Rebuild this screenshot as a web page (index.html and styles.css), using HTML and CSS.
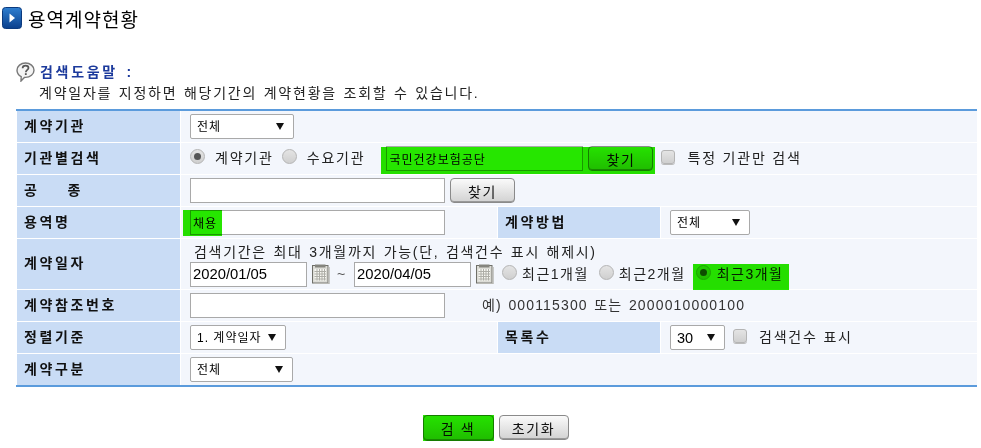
FILE: index.html
```html
<!DOCTYPE html>
<html lang="ko">
<head>
    <meta charset="UTF-8">
    <title>용역계약현황</title>
    <link rel="stylesheet" href="styles.css">
</head>
<body>
    <div class="page-title">
        <svg class="title-icon" width="20" height="22" viewBox="0 0 20 22">
            <defs>
                <linearGradient id="titleBlue" x1="0" y1="0" x2="0" y2="1">
                    <stop offset="0" stop-color="#2f7fd0"/>
                    <stop offset="1" stop-color="#0a3f8c"/>
                </linearGradient>
            </defs>
            <rect x="0.5" y="0.5" width="19" height="21" rx="3" fill="url(#titleBlue)" stroke="#0b3a7e"/>
            <path d="M7.5 6.5 L13 11 L7.5 15.5 Z" fill="#fff"/>
        </svg>
        <h1>용역계약현황</h1>
    </div>

    <div class="help">
        <div class="help-head">
            <svg class="help-icon" width="19" height="20" viewBox="0 0 19 20">
                <path d="M9.5 1 C14.2 1 18 4.2 18 8.2 C18 12.2 14.2 15.4 9.5 15.4 L8.4 15.4 L5 19 L5.2 14.6 C2.7 13.3 1 11 1 8.2 C1 4.2 4.8 1 9.5 1 Z" fill="#f4f4f4" stroke="#777" stroke-width="1.4"/>
                <path d="M6.6 6.2 C6.6 4.5 8 3.6 9.6 3.6 C11.2 3.6 12.5 4.6 12.5 6 C12.5 7.8 9.8 8 9.8 10.2" fill="none" stroke="#555" stroke-width="1.7"/>
                <rect x="8.9" y="11.2" width="1.8" height="1.8" fill="#555"/>
            </svg>
            <strong>검색도움말 :</strong>
        </div>
        <p>계약일자를 지정하면 해당기간의 계약현황을 조회할 수 있습니다.</p>
    </div>

    <table class="search-table">
        <colgroup>
            <col class="col-label-a">
            <col class="col-value">
            <col class="col-label-b">
            <col class="col-value">
        </colgroup>
        <tr>
            <th>계약기관</th>
            <td colspan="3"><div class="field"><select class="sel sel-agency"><option>전체</option></select></div></td>
        </tr>
        <tr>
            <th>기관별검색</th>
            <td colspan="3">
                <div class="field">
                    <input type="radio" name="kind" class="radio" checked>
                    <span class="opt opt-kind">계약기관</span>
                    <input type="radio" name="kind" class="radio">
                    <span class="opt opt-demand">수요기관</span>
                    <span class="marked">
                        <input type="text" class="txt txt-org" value="국민건강보험공단">
                        <button class="btn btn-find">찾기</button>
                        <span class="mark mark-org"></span>
                    </span>
                    <input type="checkbox" class="check">
                    <span class="opt">특정 기관만 검색</span>
                </div>
            </td>
        </tr>
        <tr>
            <th><span class="spread">공    종</span></th>
            <td colspan="3">
                <div class="field">
                    <input type="text" class="txt txt-wide">
                    <button class="btn btn-find btn-kind">찾기</button>
                </div>
            </td>
        </tr>
        <tr>
            <th>용역명</th>
            <td>
                <div class="field">
                    <span class="marked">
                        <input type="text" class="txt txt-wide" value="채용">
                        <span class="mark mark-name"></span>
                    </span>
                </div>
            </td>
            <th class="label-b">계약방법</th>
            <td><div class="field"><select class="sel sel-method"><option>전체</option></select></div></td>
        </tr>
        <tr class="row-date">
            <th>계약일자</th>
            <td colspan="3">
                <p class="date-note">검색기간은 최대 3개월까지 가능(단, 검색건수 표시 해제시)</p>
                <div class="field">
                    <input type="text" class="txt txt-date" value="2020/01/05">
                    <svg class="cal" width="18" height="20" viewBox="0 0 18 20">
                        <use href="#calIcon"/>
                    </svg>
                    <span class="tilde">~</span>
                    <input type="text" class="txt txt-date" value="2020/04/05">
                    <svg class="cal" width="18" height="20" viewBox="0 0 18 20">
                        <defs>
                            <g id="calIcon">
                                <rect x="0.5" y="1.5" width="15.5" height="17.5" fill="#dcdcd6" stroke="#6f6f68"/>
                                <rect x="3" y="0.5" width="10.5" height="3" fill="#85857e"/>
                                <rect x="2.5" y="5" width="11.5" height="11.5" fill="#f7f7f2"/>
                                <path d="M2.5 7.5H14M2.5 10H14M2.5 12.5H14M2.5 15H14M5 5V16.5M7.5 5V16.5M10 5V16.5M12.5 5V16.5" stroke="#aeaea7" stroke-width="1"/>
                                <path d="M17 3V19.5H2" fill="none" stroke="#b9b9b4" stroke-width="1.5"/>
                            </g>
                        </defs>
                        <use href="#calIcon"/>
                    </svg>
                    <input type="radio" name="period" class="radio radio-m1">
                    <span class="opt opt-month">최근1개월</span>
                    <input type="radio" name="period" class="radio">
                    <span class="opt opt-month opt-month-last">최근2개월</span>
                    <span class="marked marked-month">
                        <input type="radio" name="period" class="radio" checked>
                        <span class="opt">최근3개월</span>
                        <span class="mark mark-month"></span>
                    </span>
                </div>
            </td>
        </tr>
        <tr>
            <th>계약참조번호</th>
            <td colspan="3">
                <div class="field">
                    <input type="text" class="txt txt-wide">
                    <span class="ref-example">예) 000115300 또는 2000010000100</span>
                </div>
            </td>
        </tr>
        <tr>
            <th>정렬기준</th>
            <td><div class="field"><select class="sel sel-sort"><option>1. 계약일자</option></select></div></td>
            <th class="label-b">목록수</th>
            <td>
                <div class="field">
                    <select class="sel sel-count"><option>30</option></select>
                    <input type="checkbox" class="check check-count">
                    <span class="opt">검색건수 표시</span>
                </div>
            </td>
        </tr>
        <tr>
            <th>계약구분</th>
            <td colspan="3"><div class="field"><select class="sel sel-agency sel-type"><option>전체</option></select></div></td>
        </tr>
    </table>

    <div class="actions">
        <span class="marked">
            <button class="btn btn-search">검 색</button>
            <span class="mark mark-search"></span>
        </span>
        <button class="btn btn-reset">초기화</button>
    </div>
</body>
</html>
```

FILE: styles.css
```css
:root {
    --label-bg: #c9dcf5;
    --cell-bg: #f3f6fc;
    --line-blue: #5b9bdc;
    --mark-green: #26e600;
    --text-color: #222;
}

* {
    margin: 0;
    padding: 0;
    box-sizing: border-box;
}

body {
    background: #fff;
    color: var(--text-color);
    font-family: "Liberation Sans", "Noto Sans CJK KR", sans-serif;
    font-size: 14px;
    padding: 7px 4px 0 16px;
}

.page-title {
    display: flex;
    align-items: center;
    height: 22px;
    margin-left: -14px;
}

.title-icon {
    margin-right: 6px;
}

h1 {
    font-size: 19px;
    font-weight: 400;
    color: #000;
    letter-spacing: 1px;
}

.help {
    margin-top: 33px;
    height: 47px;
}

.help-head {
    display: flex;
    align-items: center;
    height: 20px;
}

.help-head strong {
    margin: 0 0 3px 5px;
    color: #1c3a9c;
    font-size: 14px;
    letter-spacing: 2.7px;
    word-spacing: 2px;
}

.help p {
    margin: 2px 0 0 23px;
    letter-spacing: 1.75px;
    word-spacing: 1px;
    line-height: 18px;
}

.search-table {
    width: 961px;
    table-layout: fixed;
    border-collapse: separate;
    border-spacing: 0;
    border-top: 2px solid var(--line-blue);
    border-bottom: 2px solid var(--line-blue);
}

.col-label-a {
    width: 165px;
}

.col-label-b {
    width: 164px;
}

.col-value {
    width: 316px;
}

th, td {
    height: 32px;
    border-bottom: 1px solid #fff;
    vertical-align: middle;
}

tr:last-child th, tr:last-child td {
    height: 31px;
    border-bottom: 0;
}

th {
    background: var(--label-bg);
    border-left: 1px solid #fff;
    border-right: 1px solid #fff;
    padding: 0 0 4px 7px;
    text-align: left;
    font-size: 14px;
    font-weight: 700;
    color: #111;
    letter-spacing: 2.6px;
}

.spread {
    white-space: pre;
    letter-spacing: 3px;
}

td {
    background: var(--cell-bg);
    padding-left: 9px;
}

.row-date th, .row-date td {
    height: 51px;
}

.field {
    display: flex;
    align-items: center;
    height: 25px;
}

.date-note {
    margin-left: 4px;
    line-height: 20px;
    letter-spacing: 1.7px;
    word-spacing: 1px;
}

.txt {
    height: 25px;
    border: 1px solid #a9a9a9;
    background: #fff;
    padding: 0 2px;
    font-family: inherit;
    font-size: 12px;
    letter-spacing: 1px;
    color: #000;
    outline: none;
}

.txt-wide {
    width: 255px;
}

.txt-org {
    width: 197px;
}

.txt-date {
    width: 117px;
    font-size: 14.8px;
    letter-spacing: 0;
}

.sel {
    height: 25px;
    appearance: none;
    border: 1px solid #a9a9a9;
    border-radius: 2px;
    padding-left: 6px;
    font-family: inherit;
    font-size: 12px;
    letter-spacing: 1px;
    color: #000;
    background: #fff url("data:image/svg+xml,%3Csvg xmlns='http://www.w3.org/2000/svg' width='8' height='7'%3E%3Cpath d='M0 0H8L4 7Z' fill='%23111'/%3E%3C/svg%3E") no-repeat right 9px center;
}

.sel-agency {
    width: 104px;
}

.sel-agency.sel-type {
    width: 103px;
}

.sel-method {
    width: 80px;
}

.sel-sort {
    width: 96px;
}

.sel-count {
    width: 55px;
    font-size: 14.5px;
    letter-spacing: 0;
}

.radio, .check {
    appearance: none;
    flex: none;
    background: linear-gradient(#e4e4e4, #cfcfcf);
    border: 1px solid #b4b4b4;
}

.radio {
    position: relative;
    width: 15px;
    height: 15px;
    margin-top: -4px;
    border-radius: 50%;
}

.radio:checked::after {
    content: "";
    position: absolute;
    left: 3px;
    top: 3px;
    width: 7px;
    height: 7px;
    border-radius: 50%;
    background: #555;
}

.check {
    width: 14px;
    height: 14px;
    border-radius: 3px;
    margin: -4px 12px 0 8px;
    box-shadow: 0 1px 0 #bbb;
}

.opt {
    padding-bottom: 3px;
    letter-spacing: 1.8px;
    white-space: nowrap;
}

.opt-kind {
    margin: 0 8px 0 10px;
}

.opt-demand {
    margin: 0 21px 0 10px;
}

.opt-month {
    margin: 0 10px 0 5px;
    letter-spacing: 1.5px;
}

.opt-month-last {
    margin-right: 7px;
}

.marked {
    position: relative;
    display: flex;
    align-items: center;
    align-self: stretch;
}

.marked-month {
    padding: 0 6px 0 3px;
}

.marked-month .opt {
    margin-left: 6px;
    letter-spacing: 1.5px;
}

.mark {
    position: absolute;
    background: var(--mark-green);
    mix-blend-mode: multiply;
}

.mark-org {
    left: -5px;
    right: -2px;
    top: 1px;
    bottom: -3px;
}

.mark-name {
    left: -7px;
    top: 0;
    width: 39px;
    height: 26px;
}

.mark-month {
    left: 0;
    right: 0;
    top: 2px;
    bottom: -3px;
}

.mark-search {
    left: 0;
    right: 0;
    top: 0;
    bottom: 0;
}

.btn {
    height: 25px;
    width: 65px;
    border: 1px solid #8a8a8a;
    border-radius: 4px;
    background: linear-gradient(#fafafa, #d2d2d2);
    box-shadow: inset 0 -1px 0 #999;
    font-family: inherit;
    font-size: 14px;
    letter-spacing: 1.7px;
    color: #111;
}

.btn-find {
    margin-left: 5px;
}

.cal {
    margin-left: 5px;
    flex: none;
}

.tilde {
    margin: 0 8px 0 7px;
    width: 9px;
    font-size: 14px;
    color: #555;
}

.radio-m1 {
    margin-left: 8px;
}

.ref-example {
    margin-left: 37px;
    padding-bottom: 3px;
    letter-spacing: 1.15px;
    word-spacing: 1.5px;
    color: #333;
    white-space: nowrap;
}

.actions {
    display: flex;
    justify-content: center;
    align-items: flex-start;
    gap: 5px;
    margin: 28px 2px 0 0;
}

.btn-search {
    width: 71px;
    height: 26px;
}

.btn-reset {
    width: 70px;
}
```
